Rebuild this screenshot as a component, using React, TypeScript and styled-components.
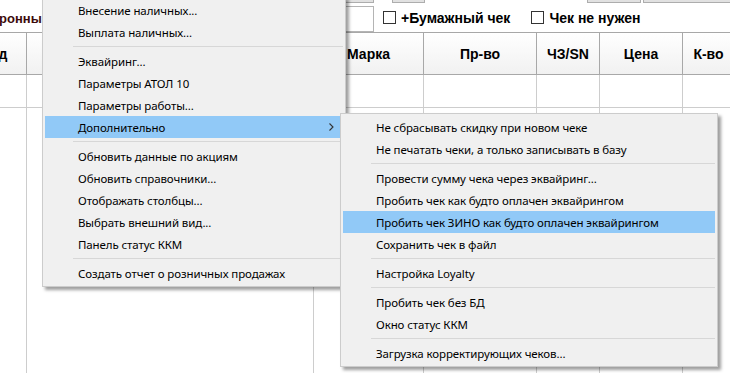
import React from "react";
import styled, { createGlobalStyle } from "styled-components";

const GlobalStyle = createGlobalStyle`
  html, body { margin: 0; padding: 0; background: #ffffff; overflow: hidden; }
  * { box-sizing: border-box; }
`;

const Window = styled.div`
  position: relative;
  width: 730px;
  height: 373px;
  overflow: hidden;
  background: #ffffff;
  font-family: "Liberation Sans", Arial, sans-serif;
`;

const Toolbar = styled.div`
  display: flex;
  height: 20px;
  margin-top: -17px;
`;

const ToolButton = styled.div<{ $left: number; $w: number }>`
  flex: 0 0 ${(p) => p.$w}px;
  margin-left: ${(p) => p.$left}px;
  background: #e1e1e1;
  border: 1px solid #adadad;
`;

const FilterRow = styled.div`
  display: flex;
  align-items: center;
  height: 29px;
`;

const TitleCell = styled.div`
  flex: 0 0 300px;
  overflow: visible;
  white-space: nowrap;
`;

const Title = styled.span`
  display: inline-block;
  margin-left: -38px;
  font-weight: bold;
  font-size: 13px;
  color: #3c0a0a;
`;

const Input = styled.div`
  flex: 0 0 74px;
  height: 26px;
  margin-top: 2px;
  background: #ffffff;
  border: 1px solid #b4b4b4;
`;

const CheckLabel = styled.label<{ $left: number }>`
  display: flex;
  align-items: center;
  margin-left: ${(p) => p.$left}px;
  font-weight: bold;
  font-size: 14px;
  color: #000000;
  white-space: nowrap;
`;

const Box = styled.span`
  display: inline-block;
  width: 13px;
  height: 13px;
  margin-right: 5px;
  background: #ffffff;
  border: 1px solid #333333;
`;

const COLS = "64px 287px 110px 113px 63px 83px 52px";

const Table = styled.div`
  margin-left: -37px;
  width: 772px;
`;

const HeaderRow = styled.div`
  display: grid;
  grid-template-columns: ${COLS};
  height: 43px;
  border-top: 1px solid #a8a8a8;
  border-bottom: 1px solid #a8a8a8;
  background: linear-gradient(#ffffff, #f1f1f1);
`;

const HeaderCell = styled.div`
  display: flex;
  align-items: center;
  justify-content: center;
  border-right: 1px solid #a8a8a8;
  font-weight: bold;
  font-size: 14px;
  color: #000000;
  white-space: nowrap;
`;

const Body = styled.div`
  display: grid;
  grid-template-columns: ${COLS};
  grid-template-rows: 33px 1fr;
  height: 300px;
`;

const BodyCell = styled.div<{ $first?: boolean }>`
  border-right: 1px solid #cdcdcd;
  border-bottom: ${(p) => (p.$first ? "1px solid #cdcdcd" : "none")};
`;

const Menu = styled.div<{ $left: number; $top: number; $w: number }>`
  position: absolute;
  left: ${(p) => p.$left}px;
  top: ${(p) => p.$top}px;
  width: ${(p) => p.$w}px;
  padding: 2px;
  background: #f0f0f0;
  border: 1px solid #cccccc;
  box-shadow: 3px 3px 3px rgba(0, 0, 0, 0.38);
  font-family: "Noto Sans", "Open Sans", sans-serif;
  font-size: 11.5px;
  letter-spacing: -0.1px;
  color: #000000;
`;

const Item = styled.div<{ $active?: boolean }>`
  display: flex;
  align-items: center;
  height: 22px;
  padding-left: 33px;
  padding-right: 9px;
  background: ${(p) => (p.$active ? "#91c9f7" : "transparent")};
  white-space: nowrap;
`;

const Arrow = styled.svg`
  margin-left: auto;
`;

const Separator = styled.div`
  height: 7px;
  margin-left: 28px;
  display: flex;
  align-items: center;
  &::after {
    content: "";
    display: block;
    width: 100%;
    height: 1px;
    background: #d7d7d7;
  }
`;

type Entry = { label?: string; sep?: boolean; active?: boolean; sub?: boolean };

const mainMenu: Entry[] = [
  { label: "Внесение наличных..." },
  { label: "Выплата наличных..." },
  { sep: true },
  { label: "Эквайринг..." },
  { label: "Параметры АТОЛ 10" },
  { label: "Параметры работы..." },
  { label: "Дополнительно", active: true, sub: true },
  { sep: true },
  { label: "Обновить данные по акциям" },
  { label: "Обновить справочники..." },
  { label: "Отображать столбцы..." },
  { label: "Выбрать внешний вид..." },
  { label: "Панель статус ККМ" },
  { sep: true },
  { label: "Создать отчет о розничных продажах" },
];

const subMenu: Entry[] = [
  { label: "Не сбрасывать скидку при новом чеке" },
  { label: "Не печатать чеки, а только записывать в базу" },
  { sep: true },
  { label: "Провести сумму чека через эквайринг..." },
  { label: "Пробить чек как будто оплачен эквайрингом" },
  { label: "Пробить чек ЗИНО как будто оплачен эквайрингом", active: true },
  { label: "Сохранить чек в файл" },
  { sep: true },
  { label: "Настройка Loyalty" },
  { sep: true },
  { label: "Пробить чек без БД" },
  { label: "Окно статус ККМ" },
  { sep: true },
  { label: "Загрузка корректирующих чеков..." },
];

const headers = ["Код", "Наименование", "Марка", "Пр-во", "ЧЗ/SN", "Цена", "К-во"];

function MenuList({ entries }: { entries: Entry[] }) {
  return (
    <>
      {entries.map((e, i) =>
        e.sep ? (
          <Separator key={i} />
        ) : (
          <Item key={i} $active={e.active}>
            {e.label}
            {e.sub && (
              <Arrow width="5" height="8" viewBox="0 0 5 8">
                <path d="M0.5 0.5 L4 4 L0.5 7.5" fill="none" stroke="#333" strokeWidth="1.1" />
              </Arrow>
            )}
          </Item>
        )
      )}
    </>
  );
}

export default function App() {
  return (
    <>
      <GlobalStyle />
      <Window>
        <Toolbar>
          <ToolButton $left={300} $w={74} />
          <ToolButton $left={18} $w={33} />
          <ToolButton $left={162} $w={54} />
          <ToolButton $left={2} $w={100} />
        </Toolbar>
        <FilterRow>
          <TitleCell>
            <Title>Электронный чек</Title>
          </TitleCell>
          <Input />
          <CheckLabel $left={9}>
            <Box />
            +Бумажный чек
          </CheckLabel>
          <CheckLabel $left={21}>
            <Box />
            Чек не нужен
          </CheckLabel>
        </FilterRow>
        <Table>
          <HeaderRow>
            {headers.map((h) => (
              <HeaderCell key={h}>{h}</HeaderCell>
            ))}
          </HeaderRow>
          <Body>
            {headers.map((h) => (
              <BodyCell key={"a" + h} $first />
            ))}
            {headers.map((h) => (
              <BodyCell key={"b" + h} />
            ))}
          </Body>
        </Table>
        <Menu $left={42} $top={-4} $w={304}>
          <MenuList entries={mainMenu} />
        </Menu>
        <Menu $left={340} $top={113} $w={378}>
          <MenuList entries={subMenu} />
        </Menu>
      </Window>
    </>
  );
}
